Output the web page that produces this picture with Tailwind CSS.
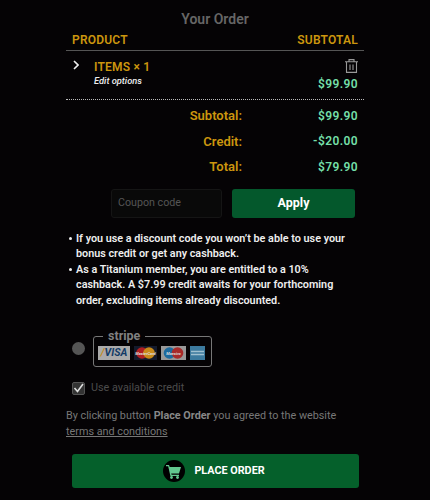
<!DOCTYPE html>
<html lang="en">
  <head>
    <meta charset="UTF-8" />
    <script src="https://cdn.jsdelivr.net/npm/@tailwindcss/browser@4"></script>
    <title>Your Order</title>
  </head>
  <body class="bg-[#050305] font-['Roboto',sans-serif] w-[430px] h-[500px] overflow-hidden">
    <div class="w-[298px] ml-[66px] flex flex-col">
      <p class="h-[30px] pt-[10px] text-center text-[14px] leading-[18px] font-semibold text-[#666]">Your Order</p>

      <div class="h-[20px] px-[6px] flex justify-between items-center text-[12px] font-semibold text-[#cc960e] tracking-[0.2px] border-b border-[#555] box-content">
        <span>PRODUCT</span>
        <span>SUBTOTAL</span>
      </div>

      <div class="h-[48px] flex border-b border-dotted border-[#bbb] box-content">
        <div class="pl-[7px] pt-[9px] w-[28px]">
          <svg width="6" height="10" viewBox="0 0 6 10" fill="none" stroke="#eee" stroke-width="1.6"><path d="M1 1l4 4-4 4" /></svg>
        </div>
        <div class="flex-1 pt-[7px]">
          <p class="text-[12px] leading-[18px] font-semibold text-[#cc960e] tracking-[0.2px]">ITEMS × 1</p>
          <p class="text-[9.3px] leading-[12px] mt-[-1.5px] italic font-medium text-[#eee]">Edit options</p>
        </div>
        <div class="pr-[6px] pt-[8px] flex flex-col items-end">
          <svg width="13" height="14" viewBox="0 0 13 14" fill="none" stroke="#999" stroke-width="1.1">
            <path d="M0 2.8h13M4 2.8V.6h5v2.2M1.5 2.8v10.6h10V2.8M5 5.5v5.5M8 5.5v5.5" />
          </svg>
          <p class="text-[12px] leading-[18px] mt-[2px] font-semibold text-[#74dfa8] tracking-[0.4px]">$99.90</p>
        </div>
      </div>

      <div class="pt-[3px] flex flex-col text-[13px] font-semibold">
        <div class="h-[25.5px] flex items-center pr-[6px]"><span class="w-[176px] text-right text-[#cc960e]">Subtotal:</span><span class="flex-1 text-right text-[12px] text-[#74dfa8] tracking-[0.4px]">$99.90</span></div>
        <div class="h-[25.5px] flex items-center pr-[6px]"><span class="w-[176px] text-right text-[#cc960e]">Credit:</span><span class="flex-1 text-right text-[12px] text-[#74dfa8] tracking-[0.4px]">-$20.00</span></div>
        <div class="h-[25.5px] flex items-center pr-[6px]"><span class="w-[176px] text-right text-[#cc960e]">Total:</span><span class="flex-1 text-right text-[12px] text-[#74dfa8] tracking-[0.4px]">$79.90</span></div>
      </div>

      <div class="mt-[9px] pl-[45px] flex gap-[10px]">
        <div class="w-[111px] h-[29px] px-[6px] flex items-center bg-[#090909] border border-[#151515] rounded-[3px] text-[10.7px] text-[#555]">Coupon code</div>
        <div class="w-[123px] h-[29px] flex items-center justify-center bg-[#04582c] rounded-[3px] text-[12.5px] font-bold text-white">Apply</div>
      </div>

      <div class="mt-[13px] pl-[2px] pr-[12px] flex flex-col text-[10.8px] leading-[15.5px] font-semibold text-[#eee]">
        <div class="flex">
          <span class="w-[3px] h-[3px] mt-[6px] ml-[1px] mr-[4px] rounded-full bg-[#eee] shrink-0"></span>
          <p>If you use a discount code you won’t be able to use your bonus credit or get any cashback.</p>
        </div>
        <div class="flex">
          <span class="w-[3px] h-[3px] mt-[6px] ml-[1px] mr-[4px] rounded-full bg-[#eee] shrink-0"></span>
          <p>As a Titanium member, you are entitled to a 10% cashback. A $7.99 credit awaits for your forthcoming order, excluding items already discounted.</p>
        </div>
      </div>

      <div class="mt-[28px] pl-[6px] flex items-start">
        <div class="w-[13px] h-[13px] rounded-full bg-[#555] mt-[6px]"></div>
        <div class="relative ml-[8px] w-[119px] h-[31px] border border-[#777] rounded-[3px] flex items-start gap-[4px] pl-[4px] pt-[9px]">
          <span class="absolute left-[9px] top-[-10px] px-[5px] bg-[#050305] text-[12.5px] leading-[18px] font-bold text-[#808080]">stripe</span>
          <div class="w-[32px] h-[14px] bg-[#aaa] flex items-center justify-center text-[10.5px] leading-none font-bold italic text-[#123a66]"><span class="text-[#c48a1a]">/</span>VISA</div>
          <svg width="23" height="14" viewBox="0 0 23 14"><rect width="23" height="14" fill="#141a2c" /><circle cx="8" cy="7" r="5.8" fill="#b01e22" /><circle cx="15" cy="7" r="5.8" fill="#c98a1a" /><text x="11.5" y="8.5" text-anchor="middle" font-size="4" font-weight="700" font-style="italic" fill="#ddd">MasterCard</text></svg>
          <svg width="25" height="14" viewBox="0 0 25 14"><rect width="25" height="14" fill="#999" /><circle cx="8.5" cy="7" r="5.8" fill="#1d6a9e" /><circle cx="16.5" cy="7" r="5.8" fill="#a82a2a" /><text x="12.5" y="8.5" text-anchor="middle" font-size="4" font-weight="700" font-style="italic" fill="#ddd">Maestro</text></svg>
          <svg width="15" height="14" viewBox="0 0 15 14"><rect width="15" height="14" fill="#3c7a9e" /><path d="M1 5.5h13M1 8.5h13" stroke="#9fc0d0" stroke-width="1.6" /></svg>
        </div>
      </div>

      <div class="mt-[13px] pl-[6px] flex items-center gap-[6px]">
        <div class="w-[13px] h-[13px] flex items-center justify-center bg-[#333] border border-[#555] rounded-[2px]">
          <svg width="11" height="10" viewBox="0 0 11 10" fill="none" stroke="#ddd" stroke-width="1.6"><path d="M1.5 5l3 3.5L10 1" /></svg>
        </div>
        <span class="text-[10.8px] leading-[16px] text-[#4c4c4c]">Use available credit</span>
      </div>

      <div class="mt-[12px] text-[10.8px] leading-[15.5px] text-[#777]">
        <p>By clicking button <b class="font-bold text-[#888]">Place Order</b> you agreed to the website</p>
        <p class="underline">terms and conditions</p>
      </div>

      <div class="mt-[15px] ml-[6px] w-[287px] h-[34px] flex items-center justify-center gap-[9px] pr-[3px] bg-[#05602b] rounded-[3px]">
        <div class="w-[22px] h-[22px] rounded-full bg-black flex items-center justify-center">
          <svg width="16" height="15" viewBox="0 0 16 15" fill="#62c98f"><path d="M0 1h3l.7 2H15l-2 6.5H5.2l.4 1.2H13v1.2H4.4L2.2 2.2H0z" /><circle cx="5.5" cy="13.5" r="1.4" /><circle cx="11.5" cy="13.5" r="1.4" /></svg>
        </div>
        <span class="text-[10.8px] font-bold text-white">PLACE ORDER</span>
      </div>
    </div>
  </body>
</html>
